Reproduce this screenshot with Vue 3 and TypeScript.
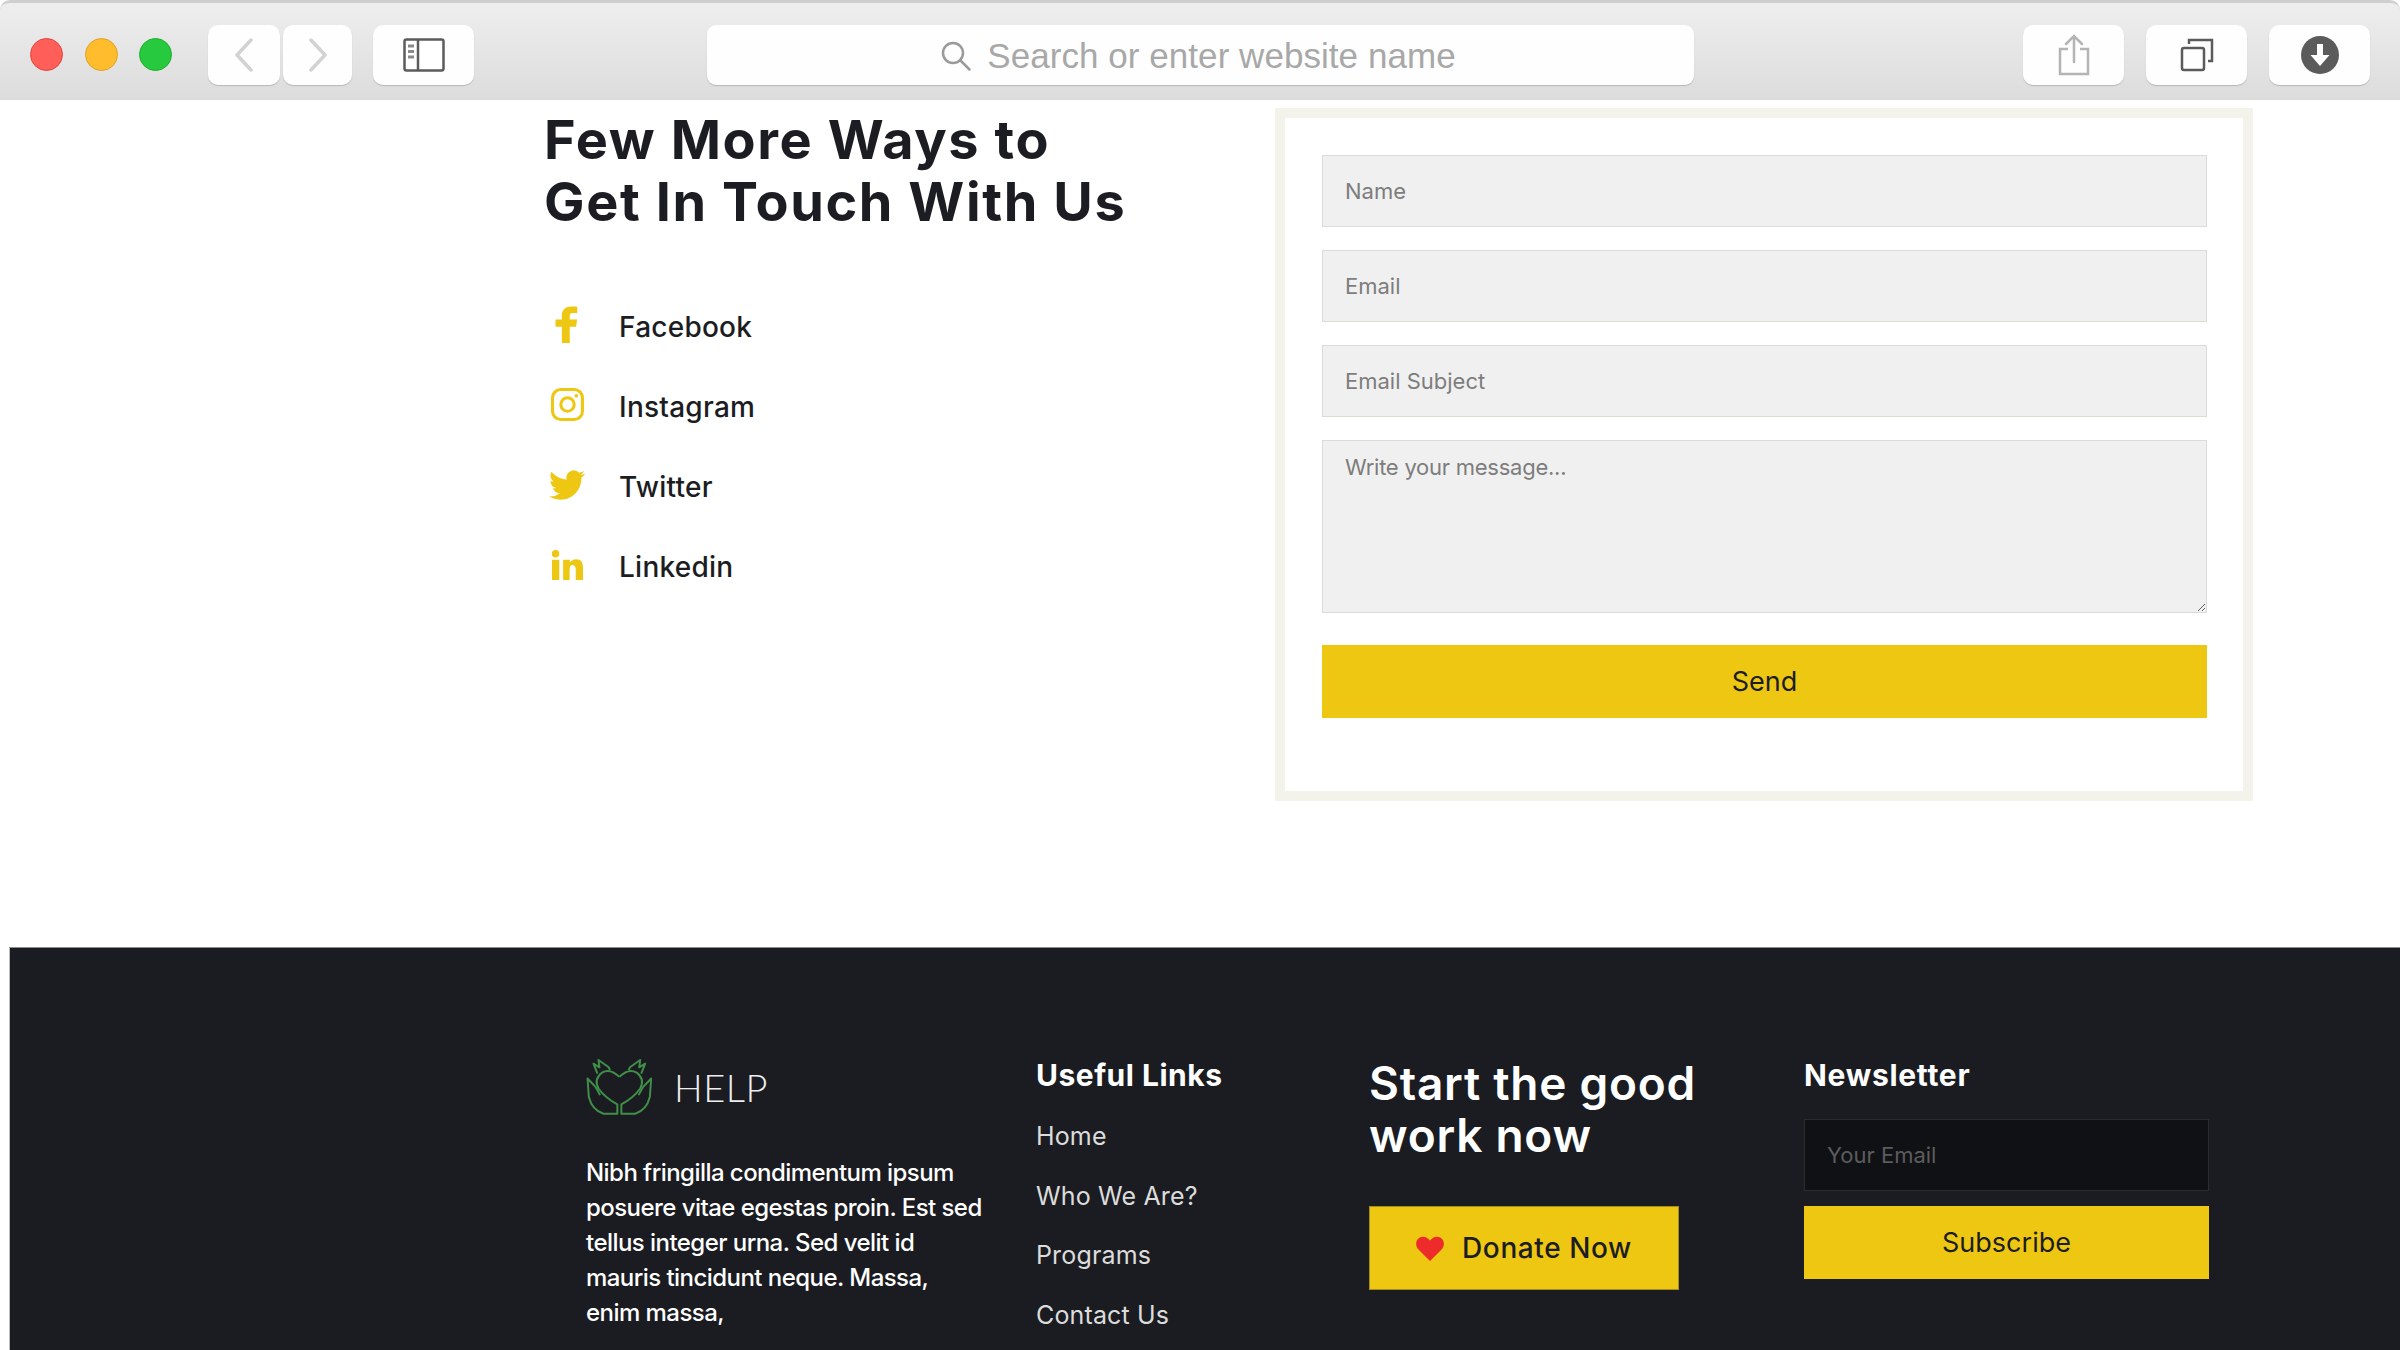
<template>
  <div class="page">
    <header class="toolbar">
      <div class="lights">
        <span class="light red"></span>
        <span class="light yellow"></span>
        <span class="light green"></span>
      </div>
      <div class="nav">
        <button class="tool back" aria-label="Back">
          <svg width="20" height="34" viewBox="0 0 20 34"><path d="M17 2 3 17l14 15" fill="none" stroke="#d2d2d2" stroke-width="3.500" stroke-linecap="round" stroke-linejoin="round" /></svg>
        </button>
        <button class="tool forward" aria-label="Forward">
          <svg width="20" height="34" viewBox="0 0 20 34"><path d="M3 2l14 15L3 32" fill="none" stroke="#d2d2d2" stroke-width="3.500" stroke-linecap="round" stroke-linejoin="round" /></svg>
        </button>
      </div>
      <button class="tool sidebar" aria-label="Sidebar">
        <svg width="42" height="34" viewBox="0 0 42 34">
          <rect x="1.500" y="1.500" width="39" height="31" rx="2" fill="#fff" stroke="#5b5b5b" stroke-width="2.500" />
          <path d="M15 2v30" stroke="#5b5b5b" stroke-width="2.500" />
          <path d="M5 8h6M5 13.500h6M5 19h6" stroke="#8a8a8a" stroke-width="3" />
        </svg>
      </button>
      <div class="search">
        <svg width="34" height="34" viewBox="0 0 34 34"><circle cx="14" cy="14" r="10" fill="none" stroke="#9a9a9a" stroke-width="2.500" /><path d="m21.500 21.500 9 9" stroke="#9a9a9a" stroke-width="2.500" stroke-linecap="round" /></svg>
        <span>Search or enter website name</span>
      </div>
      <div class="actions">
        <button class="tool action" aria-label="Share">
          <svg width="32" height="42" viewBox="0 0 32 42" fill="none" stroke="#b4b4b4" stroke-width="2.500"><path d="M10 15H2v25h28V15h-8" /><path d="M16 28V2M8 10l8-8 8 8" stroke-linecap="round" /></svg>
        </button>
        <button class="tool action" aria-label="Tabs">
          <svg width="34" height="34" viewBox="0 0 34 34" fill="none" stroke="#5b5b5b" stroke-width="2.500"><rect x="2" y="10" width="22" height="22" rx="2" /><path d="M9 6V2h23v21h-4" /></svg>
        </button>
        <button class="tool action" aria-label="Downloads">
          <svg width="38" height="38" viewBox="0 0 38 38"><circle cx="19" cy="19" r="19" fill="#5b5b5b" /><path d="M16 8h6v11h6.500L19 30 9.500 19H16z" fill="#fff" /></svg>
        </button>
      </div>
    </header>

    <main class="contact">
      <section class="ways">
        <h2>Few More Ways to<br />Get In Touch With Us</h2>
        <ul class="socials">
          <li v-for="item in socials" :key="item.name">
            <span class="social-icon" v-html="item.icon"></span>
            <span>{{ item.name }}</span>
          </li>
        </ul>
      </section>
      <form class="form" @submit.prevent>
        <input type="text" placeholder="Name" />
        <input type="text" placeholder="Email" />
        <input type="text" placeholder="Email Subject" />
        <textarea placeholder="Write your message..."></textarea>
        <button class="send" type="submit">Send</button>
      </form>
    </main>

    <footer class="footer">
      <div class="about">
        <div class="logo">
          <svg width="68" height="57" viewBox="78 78 204 172" fill="none" stroke="#3f8f48" stroke-width="6" stroke-linejoin="round">
            <g v-for="flip in [false, true]" :key="String(flip)" :transform="flip ? 'translate(356 0) scale(-1 1)' : undefined">
              <path d="M178 135Q150 108 126 122Q100 142 115 170Q135 198 172 218V246H130Q96 236 86 196L82 140L106 165" />
              <path d="M112 125L100 95L118 106L115 84L145 105L150 114" />
              <path d="M106 165L120 190" />
            </g>
          </svg>
          <span class="logo-text">HELP</span>
        </div>
        <p>Nibh fringilla condimentum ipsum<br />posuere vitae egestas proin. Est sed<br />tellus integer urna. Sed velit id<br />mauris tincidunt neque. Massa,<br />enim massa,</p>
      </div>
      <nav class="links">
        <h4>Useful Links</h4>
        <a v-for="link in links" :key="link">{{ link }}</a>
      </nav>
      <div class="donate">
        <h3>Start the good<br />work now</h3>
        <button class="donate-btn">
          <svg width="28" height="25" viewBox="0 0 28 25"><path d="M14 25 2.500 13.500C-1 10-.5 4.500 3 2c3.500-2.500 8-1.500 11 2.500C17 .5 21.500-.5 25 2c3.500 2.500 4 8 .5 11.500z" fill="#ee2b2b" /></svg>
          <span>Donate Now</span>
        </button>
      </div>
      <div class="newsletter">
        <h4>Newsletter</h4>
        <input type="text" placeholder="Your Email" />
        <button class="subscribe">Subscribe</button>
      </div>
    </footer>
  </div>
</template>

<script setup lang="ts">
const socials = [
  {
    name: 'Facebook',
    icon: '<svg width="24" height="37" viewBox="5 0 14 24" preserveAspectRatio="none"><path fill="currentColor" d="M9 24V13.400H5.300V8.800H9V6c0-3.700 2.300-5.700 5.600-5.700 1.600 0 3 .1 3.400.2v4h-2.300c-1.800 0-2.100.8-2.100 2.100v2.200h4.300l-.6 4.600h-3.700V24z"/></svg>',
  },
  {
    name: 'Instagram',
    icon: '<svg width="33" height="33" viewBox="0 0 32 32" fill="none" stroke="currentColor" stroke-width="3"><rect x="1.500" y="1.500" width="29" height="29" rx="8"/><circle cx="16" cy="16" r="6.500"/><circle cx="24.500" cy="7.500" r="1.800" fill="currentColor" stroke="none"/></svg>',
  },
  {
    name: 'Twitter',
    icon: '<svg width="36" height="30" viewBox="0 2 24 20"><path fill="currentColor" d="M23.953 4.570a10 10 0 01-2.825.775 4.958 4.958 0 002.163-2.723c-.951.555-2.005.959-3.127 1.184a4.920 4.920 0 00-8.384 4.482C7.690 8.095 4.067 6.130 1.640 3.162a4.822 4.822 0 00-.666 2.475c0 1.710.870 3.213 2.188 4.096a4.904 4.904 0 01-2.228-.616v.060a4.923 4.923 0 003.946 4.827 4.996 4.996 0 01-2.212.085 4.936 4.936 0 004.604 3.417 9.867 9.867 0 01-6.102 2.105c-.390 0-.779-.023-1.170-.067a13.995 13.995 0 007.557 2.209c9.053 0 13.998-7.496 13.998-13.985 0-.210 0-.420-.015-.630A9.935 9.935 0 0024 4.590z"/></svg>',
  },
  {
    name: 'Linkedin',
    icon: '<svg width="32" height="32" viewBox="0 0 33 33"><path fill="currentColor" d="M1 11h7.500v21H1zM4.700 1a3.900 3.900 0 1 1 0 7.800 3.900 3.900 0 0 1 0-7.800zM12.500 11H19.500v3c1.300-2.200 3.600-3.500 6.300-3.500 5.300 0 7.200 3.500 7.200 9V32h-7.500V21.500c0-2.800-.7-5-3-5-2.600 0-3.300 2.200-3.300 5V32h-6.700z"/></svg>',
  },
]

const links: string[] = ['Home', 'Who We Are?', 'Programs', 'Contact Us']
</script>

<style>
html,
body {
  margin: 0;
  background: #fff;
  overflow: hidden;
}
</style>

<style scoped>
.page {
  width: 2400px;
  height: 1350px;
  overflow: hidden;
  display: flex;
  flex-direction: column;
  font-family: Inter, "Liberation Sans", sans-serif;
  color: #1c1d22;
}

/* browser chrome */
.toolbar {
  flex: none;
  height: 100px;
  box-sizing: border-box;
  border-top: 3px solid #cfcfcf;
  border-radius: 10px 10px 0 0;
  background: linear-gradient(180deg, #eeeeee, #dcdcdc);
  display: flex;
  align-items: center;
  padding: 0 30px;
}
.lights {
  display: flex;
  gap: 21.500px;
  margin-right: 36px;
}
.light {
  width: 33px;
  height: 33px;
  border-radius: 50%;
  box-sizing: border-box;
  margin-top: 6px;
}
.red { background: #ff5f58; border: 1px solid #e0443e; }
.yellow { background: #ffbd2e; border: 1px solid #dfa123; }
.green { background: #27c93f; border: 1px solid #1dad2b; }

.tool {
  height: 60px;
  padding: 0;
  margin-top: 6px;
  border: 0;
  border-radius: 10px;
  background: #fefefe;
  box-shadow: 0 1px 1px rgba(0, 0, 0, 0.18);
  display: flex;
  align-items: center;
  justify-content: center;
}
.nav {
  display: flex;
  gap: 3px;
  margin-right: 21px;
}
.back { width: 72px; }
.forward { width: 69px; }
.sidebar { width: 101px; }
.search {
  width: 987px;
  height: 60px;
  box-sizing: border-box;
  margin: 6px 0 0 233px;
  padding: 3px 6px 0 0;
  border-radius: 9px;
  background: #fefefe;
  box-shadow: 0 1px 1px rgba(0, 0, 0, 0.18);
  display: flex;
  align-items: center;
  justify-content: center;
  gap: 14px;
  color: #a8a8a8;
  font-size: 35px;
  letter-spacing: 0.05px;
  font-family: "Liberation Sans", sans-serif;
}
.actions {
  margin-left: auto;
  display: flex;
  gap: 22px;
}
.action { width: 101px; }

/* contact */
.contact {
  flex: none;
  height: 847px;
  box-sizing: border-box;
  padding: 8px 147px 0 544px;
  display: flex;
  justify-content: space-between;
  align-items: flex-start;
}
.ways h2 {
  margin: 1px 0 0;
  font-size: 54px;
  line-height: 62px;
  font-weight: 700;
  letter-spacing: 1.600px;
  color: #1c1d22;
}
.socials {
  list-style: none;
  margin: 74px 0 0;
  padding: 0;
  display: flex;
  flex-direction: column;
  gap: 40px;
}
.socials li {
  height: 40px;
  display: flex;
  align-items: center;
  gap: 27px;
  font-size: 28px;
  font-weight: 500;
  letter-spacing: 0.25px;
}
.social-icon {
  width: 48px;
  margin-left: -1px;
  margin-right: 1px;
  display: flex;
  justify-content: center;
  color: #eec713;
  margin-top: -5px;
}
.form {
  width: 978px;
  height: 693px;
  box-sizing: border-box;
  border: 10px solid #f3f3ec;
  padding: 37px 36px 0 37px;
  display: flex;
  flex-direction: column;
  gap: 23px;
}
.form input,
.form textarea,
.newsletter input {
  display: block;
  box-sizing: border-box;
  width: 100%;
  margin: 0;
  padding: 0 22px;
  border: 1px solid #dcdcd6;
  border-radius: 0;
  outline: 0;
  font-family: inherit;
  font-size: 22px;
}
.form input {
  flex: none;
  height: 72px;
  background: #f0f0f0;
}
.form textarea {
  flex: none;
  height: 173px;
  padding-top: 13px;
  background: #f0f0f0;
  resize: vertical;
  letter-spacing: -0.25px;
}
input::placeholder,
textarea::placeholder {
  color: #7d7d7d;
  opacity: 1;
}
.send {
  flex: none;
  height: 73px;
  margin-top: 9px;
  border: 0;
  background: #eec713;
  color: #1c1d22;
  font-family: inherit;
  font-size: 27px;
}

/* footer */
.footer {
  flex: 1;
  margin-left: 9px;
  box-sizing: border-box;
  border-top: 1px solid #8c8c8c;
  border-left: 1px solid #bbb;
  background: #1b1c21;
  color: #fff;
  display: flex;
  align-items: flex-start;
  padding: 110px 0 0 576px;
}
.about {
  width: 450px;
}
.logo {
  display: flex;
  align-items: center;
  gap: 20px;
  height: 57px;
}
.logo-text {
  font-family: Lato, sans-serif;
  font-weight: 300;
  font-size: 38px;
  letter-spacing: 0.5px;
  color: #eee;
}
.about p {
  margin: 40px 0 0;
  font-size: 24px;
  line-height: 35px;
  font-weight: 500;
  letter-spacing: -0.550px;
}
.links {
  width: 333px;
  display: flex;
  flex-direction: column;
}
.footer h4 {
  margin: -1px 0 0;
  font-size: 30px;
  line-height: 36px;
  font-weight: 700;
  letter-spacing: 0.5px;
}
.links a {
  margin-top: 23.500px;
  font-size: 25px;
  line-height: 36px;
  letter-spacing: 0.15px;
  color: #dcdcdc;
}
.links h4 + a {
  margin-top: 25px;
}
.donate {
  width: 435px;
}
.donate h3 {
  margin: -1px 0 0;
  font-size: 46px;
  line-height: 52px;
  font-weight: 600;
  letter-spacing: 0.750px;
}
.donate-btn {
  width: 310px;
  height: 84px;
  margin-top: 45px;
  border: 1px solid #a58c1a;
  background: #eec713;
  color: #1c1d22;
  font-family: inherit;
  font-size: 28px;
  font-weight: 500;
  letter-spacing: 0.600px;
  display: flex;
  align-items: center;
  justify-content: center;
  gap: 18px;
}
.newsletter {
  width: 405px;
}
.newsletter h4 {
  letter-spacing: 0.7px;
}
.newsletter input {
  height: 72px;
  margin-top: 26px;
  background: #101114;
  border-color: #2b2c30;
}
.newsletter input::placeholder {
  color: #5c5c5c;
}
.subscribe {
  display: block;
  width: 100%;
  height: 73px;
  margin-top: 15px;
  border: 0;
  background: #eec713;
  color: #1c1d22;
  font-family: inherit;
  font-size: 27px;
}
</style>
